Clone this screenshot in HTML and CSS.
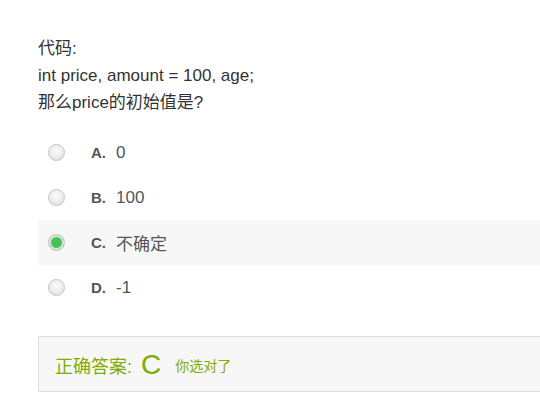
FILE: index.html
```html
<!DOCTYPE html>
<html lang="zh">
<head>
<meta charset="utf-8">
<link rel="stylesheet" href="styles.css">
</head>
<body>
<div class="page">
  <div class="question">
    <div>代码:</div>
    <div>int price, amount = 100, age;</div>
    <div>那么price的初始值是?</div>
  </div>
  <ul class="options">
    <li class="option"><span class="radio"></span><span class="key">A.</span><span class="val">0</span></li>
    <li class="option"><span class="radio"></span><span class="key">B.</span><span class="val">100</span></li>
    <li class="option selected"><span class="radio checked"></span><span class="key">C.</span><span class="val">不确定</span></li>
    <li class="option"><span class="radio"></span><span class="key">D.</span><span class="val">-1</span></li>
  </ul>
  <div class="answer">
    <span class="label">正确答案:</span><span class="letter">C</span><span class="note">你选对了</span>
  </div>
</div>
</body>
</html>
```
FILE: styles.css
```css
html, body {
  margin: 0;
  padding: 0;
  background: #fff;
  overflow: hidden;
}
.page {
  padding: 35px 0 0 38px;
  font-family: "Liberation Sans", Arial, "Noto Sans CJK SC", sans-serif;
  color: #333;
}
.question {
  font-size: 17px;
  line-height: 27px;
}
.options {
  list-style: none;
  margin: 14px 0 0 0;
  padding: 0;
}
.option {
  height: 45px;
  display: flex;
  align-items: center;
  padding-left: 10px;
  font-size: 17px;
  color: #555;
}
.option.selected {
  background: #f7f7f7;
}
.radio {
  width: 17px;
  height: 17px;
  border-radius: 50%;
  box-sizing: border-box;
  border: 1px solid #c4c4c4;
  background: radial-gradient(circle at 50% 40%, #fbfbfb 0%, #ececec 55%, #d6d6d6 100%);
}
.radio.checked {
  border: 1px solid #cfcfcf;
  background: #41c452;
  box-shadow: inset 0 0 0 2px #e4e4e4;
}
.key {
  font-weight: bold;
  font-size: 15px;
  margin-left: 26px;
  color: #555;
}
.val {
  margin-left: 10px;
}
.answer {
  margin-top: 26px;
  height: 56px;
  box-sizing: border-box;
  border: 1px solid #dcdcdc;
  border-right: none;
  background: #f7f7f7;
  display: flex;
  align-items: center;
  padding-left: 16px;
  padding-top: 1px;
  color: #80ab00;
}
.label {
  font-size: 18px;
}
.letter {
  font-size: 28px;
  margin-left: 9px;
}
.note {
  font-size: 14px;
  margin-left: 14px;
}
```
